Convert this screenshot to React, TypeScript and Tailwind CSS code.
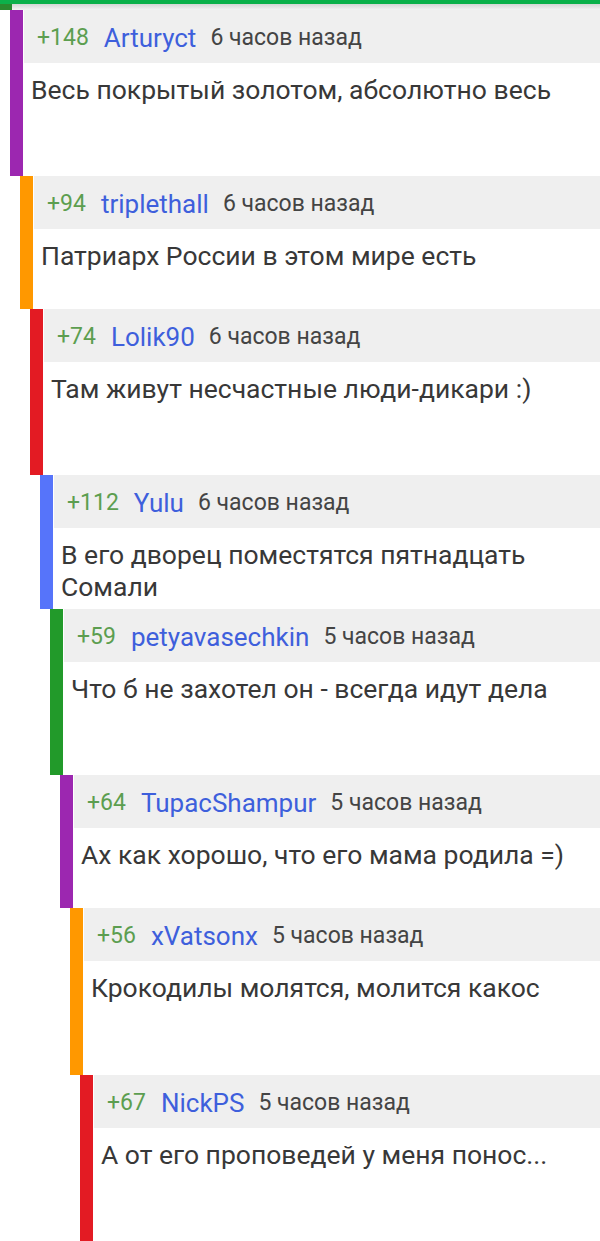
import React from 'react';

interface Comment {
  level: number;
  score: string;
  author: string;
  time: string;
  text: string;
  bar: string;
  height: string;
}

const comments: Comment[] = [
  { level: 0, score: '+148', author: 'Arturyct', time: '6 часов назад', text: 'Весь покрытый золотом, абсолютно весь', bar: 'bg-[#9c27b0]', height: 'h-[166px]' },
  { level: 1, score: '+94', author: 'triplethall', time: '6 часов назад', text: 'Патриарх России в этом мире есть', bar: 'bg-[#ff9800]', height: 'h-[133px]' },
  { level: 2, score: '+74', author: 'Lolik90', time: '6 часов назад', text: 'Там живут несчастные люди-дикари :)', bar: 'bg-[#e31b23]', height: 'h-[166px]' },
  { level: 3, score: '+112', author: 'Yulu', time: '6 часов назад', text: 'В его дворец поместятся пятнадцать Сомали', bar: 'bg-[#5674fa]', height: 'h-[134px]' },
  { level: 4, score: '+59', author: 'petyavasechkin', time: '5 часов назад', text: 'Что б не захотел он - всегда идут дела', bar: 'bg-[#229a2a]', height: 'h-[166px]' },
  { level: 5, score: '+64', author: 'TupacShampur', time: '5 часов назад', text: 'Ах как хорошо, что его мама родила =)', bar: 'bg-[#9c27b0]', height: 'h-[133px]' },
  { level: 6, score: '+56', author: 'xVatsonx', time: '5 часов назад', text: 'Крокодилы молятся, молится какос', bar: 'bg-[#ff9800]', height: 'h-[167px]' },
  { level: 7, score: '+67', author: 'NickPS', time: '5 часов назад', text: 'А от его проповедей у меня понос...', bar: 'bg-[#e31b23]', height: 'h-[166px]' },
];

const indents = ['pl-[10px]', 'pl-[20px]', 'pl-[30px]', 'pl-[40px]', 'pl-[50px]', 'pl-[60px]', 'pl-[70px]', 'pl-[80px]'];

const CommentRow: React.FC<{ c: Comment }> = ({ c }) => (
  <div className={`flex ${indents[c.level]} ${c.height}`}>
    <div className={`w-[13px] shrink-0 ${c.bar}`} />
    <div className="flex-1 flex flex-col pl-px">
      <div className="h-[53px] bg-[#efefef] flex items-center pl-[13px] pt-[3px] whitespace-nowrap">
        <span className="text-[23px] text-[#5c9e50]">{c.score}</span>
        <span className="ml-[15px] text-[26px] text-[#3e5fdc]">{c.author}</span>
        <span className="ml-[14px] text-[23px] text-[#444444]">{c.time}</span>
      </div>
      <div className="pt-[11px] pl-[7px] pr-2 text-[26.5px] leading-[32px] text-[#383838]">{c.text}</div>
    </div>
  </div>
);

export default function App() {
  return (
    <div className="w-[600px] h-[1241px] overflow-hidden bg-white font-['Roboto','Noto_Sans',sans-serif]">
      <div className="h-[4px] bg-[#0cb14b]" />
      <div className="h-[6px] flex">
        <div className="w-[12px] bg-[#2a8a2f]" />
        <div className="flex-1 bg-gradient-to-b from-[#d6d6d6] to-[#f4f4f4]" />
      </div>
      {comments.map((c, i) => (
        <CommentRow key={i} c={c} />
      ))}
    </div>
  );
}
